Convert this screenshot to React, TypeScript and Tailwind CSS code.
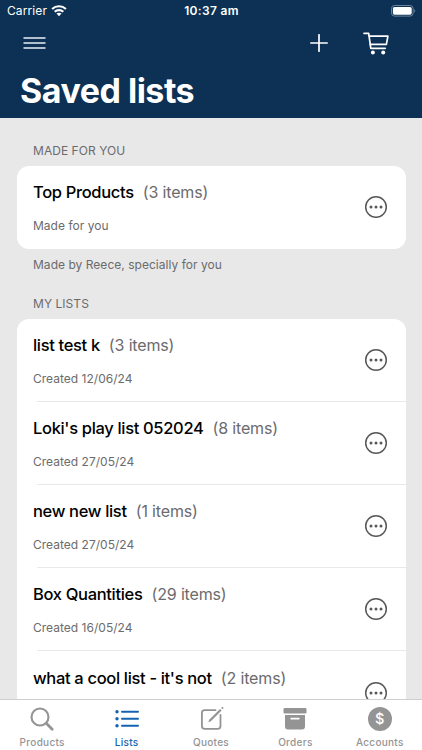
type ListItem = {
  title: string;
  count: number;
  note?: string;
};

const madeForYou: ListItem[] = [{ title: "Top Products", count: 3, note: "Made for you" }];

const myLists: ListItem[] = [
  { title: "list test k", count: 3, note: "Created 12/06/24" },
  { title: "Loki's play list 052024", count: 8, note: "Created 27/05/24" },
  { title: "new new list", count: 1, note: "Created 27/05/24" },
  { title: "Box Quantities", count: 29, note: "Created 16/05/24" },
  { title: "what a cool list - it's not", count: 2 },
];

function WifiIcon() {
  return (
    <svg width="16" height="12" viewBox="0 0 16 12" fill="none" stroke="#fff" strokeWidth="2.1">
      <path d="M1.1 4C5 .3 11 .3 14.9 4" />
      <path d="M3.7 6.8C6.1 4.5 9.9 4.5 12.3 6.8" />
      <path d="M8 11.2 5.5 8.6C6.8 7.4 9.2 7.4 10.5 8.6Z" fill="#fff" stroke="none" />
    </svg>
  );
}

function BatteryIcon() {
  return (
    <svg width="25" height="12" viewBox="0 0 25 12">
      <rect x="0.5" y="0.5" width="21.6" height="10.6" rx="3" fill="none" stroke="#6d839b" />
      <rect x="1.9" y="1.9" width="18.8" height="7.8" rx="1.6" fill="#fff" />
      <path d="M23.3 4v3.8c1.3-.5 1.3-3.3 0-3.8Z" fill="#6d839b" />
    </svg>
  );
}

function CartIcon() {
  return (
    <svg width="26" height="23" viewBox="0 0 26 23" fill="none" stroke="#fff" strokeWidth="1.7" strokeLinecap="round" strokeLinejoin="round">
      <path d="M1 1.3h4.7L7.8 16.3h14.4" />
      <path d="M6.2 4.1H24.9l-1.5 8.3H7.4" />
      <circle cx="9.9" cy="20.5" r="2" fill="#fff" stroke="none" />
      <circle cx="20.2" cy="20.5" r="2" fill="#fff" stroke="none" />
    </svg>
  );
}

function MoreIcon() {
  return (
    <svg width="24" height="24" viewBox="0 0 24 24" className="shrink-0">
      <circle cx="12" cy="12" r="10.3" fill="none" stroke="#58585a" strokeWidth="1.5" />
      <g fill="#58585a">
        <circle cx="7" cy="12" r="1.5" />
        <circle cx="12" cy="12" r="1.5" />
        <circle cx="17" cy="12" r="1.5" />
      </g>
    </svg>
  );
}

function SearchIcon() {
  return (
    <svg width="26" height="26" viewBox="0 0 26 26" fill="none" stroke="#949494">
      <circle cx="11" cy="11" r="8.5" strokeWidth="2.1" />
      <path d="m17.5 17.5 5.7 5.7" strokeWidth="2.8" strokeLinecap="round" />
    </svg>
  );
}

function BulletsIcon() {
  return (
    <svg width="26" height="26" viewBox="0 0 26 26" fill="#1563b0">
      <circle cx="3" cy="5.7" r="1.7" />
      <circle cx="3" cy="12.7" r="1.7" />
      <circle cx="3" cy="19.7" r="1.7" />
      <path d="M8 5.7h16M8 12.7h16M8 19.7h16" stroke="#1563b0" strokeWidth="2" strokeLinecap="round" />
    </svg>
  );
}

function ComposeIcon() {
  return (
    <svg width="26" height="26" viewBox="0 0 26 26" fill="none" stroke="#949494" strokeWidth="1.8" strokeLinecap="round">
      <path d="M17.5 4.2H6.7a2.8 2.8 0 0 0-2.8 2.8v13.1a2.8 2.8 0 0 0 2.8 2.8h13a2.8 2.8 0 0 0 2.8-2.8V9" />
      <path d="m10.3 16.3.9-2.6L22 2.9l1.6 1.6-10.8 10.8Z" fill="#949494" stroke="none" />
      <path d="m23.2 1.8.5-.5a1 1 0 0 1 1.3 0l.2.2a1 1 0 0 1 0 1.3l-.5.5Z" fill="#949494" stroke="none" />
    </svg>
  );
}

function ArchiveIcon() {
  return (
    <svg width="26" height="26" viewBox="0 0 26 26" fill="#949494">
      <rect x="1.5" y="2" width="23" height="5.6" rx="1.4" />
      <path fillRule="evenodd" d="M3 9h20v11.5a3 3 0 0 1-3 3H6a3 3 0 0 1-3-3ZM9.2 11.7a.9.9 0 0 0 0 1.8h7.6a.9.9 0 0 0 0-1.8Z" />
    </svg>
  );
}

function DollarIcon() {
  return (
    <span className="flex size-[23.5px] items-center justify-center rounded-full bg-[#949494] text-[14.5px] font-medium text-white">$</span>
  );
}

const tabs = [
  { label: "Products", icon: <SearchIcon />, active: false },
  { label: "Lists", icon: <BulletsIcon />, active: true },
  { label: "Quotes", icon: <ComposeIcon />, active: false },
  { label: "Orders", icon: <ArchiveIcon />, active: false },
  { label: "Accounts", icon: <DollarIcon />, active: false },
];

function ListCard({ items }: { items: ListItem[] }) {
  return (
    <div className="mr-[16.5px] ml-[16.5px] overflow-hidden rounded-xl bg-white">
      {items.map((item, i) => (
        <div key={item.title}>
          {i > 0 && <div className="-mt-px ml-5 h-px bg-[#e8e8e9]" />}
          <div className="flex h-[83.1px] items-center justify-between pr-[17.5px] pl-[16.5px]">
            <div>
              <p className="text-[16.5px] leading-6 tracking-[-0.33px] whitespace-nowrap">
                <span className="font-medium text-black">{item.title}</span>
                <span className="ml-[9px] text-base tracking-[-0.15px] text-[#6b6b6d]">({item.count} items)</span>
              </p>
              <p className="mt-3 h-[18px] text-xs leading-5 tracking-[0.02px] text-[#6b6b6d]">{item.note}</p>
            </div>
            <MoreIcon />
          </div>
        </div>
      ))}
    </div>
  );
}

export default function App() {
  return (
    <div className="flex h-[750px] w-[422px] flex-col overflow-hidden bg-[#e8e8e8] font-['Inter',sans-serif]">
      {/* Header */}
      <header className="h-[118.4px] shrink-0 bg-[#0c3154] text-white">
        <div className="grid h-[22px] grid-cols-3 items-center pr-[6px] pl-[7px]">
          <div className="flex items-center gap-1 text-xs tracking-[0.1px]">
            Carrier <WifiIcon />
          </div>
          <p className="text-center text-xs font-semibold tracking-[0.3px]">10:37 am</p>
          <div className="flex justify-end">
            <BatteryIcon />
          </div>
        </div>
        <div className="flex h-[42px] items-center pr-[33px] pl-[23px]">
          <svg width="23" height="14" viewBox="0 0 23 14" stroke="#e9eef3" strokeWidth="1.5">
            <path d="M.5 2h22M.5 7h22M.5 12h22" />
          </svg>
          <svg width="18" height="18" viewBox="0 0 18 18" stroke="#fff" strokeWidth="1.7" strokeLinecap="round" className="mr-[35px] ml-auto">
            <path d="M9 .8v16.4M.8 9h16.4" />
          </svg>
          <CartIcon />
        </div>
        <h1 className="pl-5 text-[34px] leading-[54px] font-bold tracking-[-0.5px]">Saved lists</h1>
      </header>

      {/* Lists */}
      <main className="min-h-0 flex-1 overflow-hidden">
        <h2 className="mt-[23.2px] ml-[33px] text-xs leading-[18px] tracking-[0.05px] text-[#6b6b6d]">MADE FOR YOU</h2>
        <div className="mt-[6.1px]">
          <ListCard items={madeForYou} />
        </div>
        <p className="mt-[7px] ml-[33px] text-xs leading-[18px] tracking-[0.03px] text-[#6b6b6d]">Made by Reece, specially for you</p>
        <h2 className="mt-[21px] ml-[33px] text-xs leading-[18px] tracking-[0.05px] text-[#6b6b6d]">MY LISTS</h2>
        <div className="mt-[5.9px]">
          <ListCard items={myLists} />
        </div>
      </main>

      {/* Tab bar */}
      <nav className="grid h-[51px] shrink-0 grid-cols-5 border-t border-[#cfcfcf] bg-white">
        {tabs.map((tab) => (
          <div key={tab.label} className={`flex flex-col items-center pt-1.5 text-[10px] font-medium tracking-[0.3px] ${tab.active ? "text-[#1563b0]" : "text-[#949494]"}`}>
            <div className="flex h-[26px] items-center">{tab.icon}</div>
            <span className="mt-[3px] leading-[14px]">{tab.label}</span>
          </div>
        ))}
      </nav>
    </div>
  );
}
